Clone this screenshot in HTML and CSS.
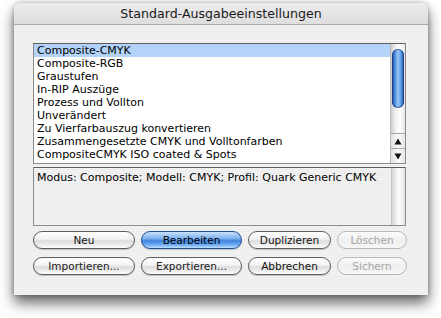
FILE: index.html
```html
<!DOCTYPE html>
<html>
<head>
<meta charset="utf-8">
<link rel="stylesheet" href="styles.css">
</head>
<body>
<div class="window">
  <div class="titlebar">Standard-Ausgabeeinstellungen</div>
  <div class="content">
    <div class="listbox">
      <ul class="items">
        <li class="sel">Composite-CMYK</li>
        <li>Composite-RGB</li>
        <li>Graustufen</li>
        <li>In-RIP Auszüge</li>
        <li>Prozess und Vollton</li>
        <li>Unverändert</li>
        <li>Zu Vierfarbauszug konvertieren</li>
        <li>Zusammengesetzte CMYK und Volltonfarben</li>
        <li>CompositeCMYK ISO coated &amp; Spots</li>
      </ul>
      <div class="scroll">
        <div class="track"><div class="thumb"></div></div>
        <div class="arrow">
          <svg width="8" height="7" viewBox="0 0 8 7"><path d="M4 0.5 L7.5 6.5 L0.5 6.5 Z" fill="#111"/></svg>
        </div>
        <div class="arrow down">
          <svg width="8" height="7" viewBox="0 0 8 7"><path d="M0.5 0.5 L7.5 0.5 L4 6.5 Z" fill="#111"/></svg>
        </div>
      </div>
    </div>
    <div class="descbox">
      <div class="desc">Modus: Composite; Modell: CMYK; Profil: Quark Generic CMYK</div>
      <div class="emptytrack"></div>
    </div>
    <div class="buttons">
      <button class="btn">Neu</button>
      <button class="btn default">Bearbeiten</button>
      <button class="btn">Duplizieren</button>
      <button class="btn disabled">Löschen</button>
      <button class="btn light">Importieren...</button>
      <button class="btn light">Exportieren...</button>
      <button class="btn">Abbrechen</button>
      <button class="btn disabled">Sichern</button>
    </div>
  </div>
</div>
</body>
</html>
```
FILE: styles.css
```css
html, body {
  margin: 0;
  padding: 0;
  background: #ffffff;
  width: 441px;
  height: 318px;
  overflow: hidden;
  font-family: "DejaVu Sans", "Liberation Sans", sans-serif;
}
.window {
  margin: 3px 0 0 14px;
  width: 414px;
  height: 292px;
  border-radius: 6px 6px 0 0;
  background: repeating-linear-gradient(180deg, #ececec 0 1px, #f3f3f3 1px 2px);
  box-shadow: 0 8px 14px rgba(0,0,0,0.6), 0 0 5px rgba(0,0,0,0.3);
  display: flex;
  flex-direction: column;
}
.titlebar {
  height: 21px;
  border-radius: 6px 6px 0 0;
  background: linear-gradient(180deg, #ececec, #dedede);
  border-bottom: 1px solid #ababab;
  text-align: center;
  font-size: 12.6px;
  line-height: 21px;
  color: #1a1a1a;
}
.content {
  padding: 18px 0 0 19px;
  display: flex;
  flex-direction: column;
}
.listbox {
  width: 371px;
  height: 119px;
  border: 1px solid #8a8a8a;
  border-top-color: #5e5e5e;
  background: #fff;
  display: flex;
}
.items {
  list-style: none;
  margin: 0;
  padding: 0;
  flex: 1;
  font-size: 11px;
  color: #000;
}
.items li {
  height: 13px;
  line-height: 13px;
  padding-left: 3px;
  white-space: nowrap;
  overflow: hidden;
}
.items li.sel {
  background: #b3d3fb;
}
.scroll {
  width: 14px;
  border-left: 1px solid #b8b8b8;
  display: flex;
  flex-direction: column;
}
.track {
  flex: 1;
  background: linear-gradient(90deg, #cfcfcf, #f2f2f2 35%, #fdfdfd 65%, #e4e4e4);
  padding-top: 5px;
  display: flex;
  justify-content: center;
}
.thumb {
  width: 12px;
  height: 59px;
  border-radius: 6px;
  background: linear-gradient(90deg, #1c4aa0, #4c8ce0 25%, #9cc8f8 50%, #5c9ae6 75%, #1c4aa0);
  box-shadow: inset 0 0 0 1px rgba(20,50,120,0.6);
}
.arrow {
  height: 14px;
  border-top: 1px solid #a8a8a8;
  background: linear-gradient(90deg, #e0e0e0, #fafafa 50%, #e8e8e8);
  display: flex;
  align-items: center;
  justify-content: center;
}
.descbox {
  margin-top: 3px;
  width: 371px;
  height: 57px;
  border: 1px solid #8a8a8a;
  border-top-color: #5e5e5e;
  display: flex;
  background: transparent;
}
.desc {
  flex: 1;
  font-size: 11px;
  line-height: 13px;
  padding: 3px 0 0 3px;
  color: #000;
}
.emptytrack {
  width: 13px;
  border-left: 1px solid #c8c8c8;
  background: linear-gradient(90deg, #d4d4d4, #f6f6f6 40%, #fcfcfc 60%, #e2e2e2);
}
.buttons {
  margin-top: 5px;
  display: grid;
  grid-template-columns: 102px 101px 83px 70px;
  column-gap: 6px;
  row-gap: 8px;
}
.btn {
  height: 18px;
  margin: 0;
  padding: 0;
  border: 1px solid #5e5e5e;
  border-radius: 9px;
  background: linear-gradient(180deg, #ffffff 0%, #f2f2f2 45%, #dcdcdc 55%, #f0f0f0 85%, #ffffff 100%);
  font-family: "DejaVu Sans", "Liberation Sans", sans-serif;
  font-size: 10.5px;
  line-height: 16px;
  color: #111;
  box-shadow: 0 1px 1px rgba(0,0,0,0.2);
}
.btn.light {
  color: #222;
}
.btn.default {
  border-color: #244d98;
  background: linear-gradient(180deg, #c9e1fb 0%, #7fb1ee 40%, #3f84dd 55%, #6eaaf0 80%, #bde0ff 100%);
  color: #000;
}
.btn.disabled {
  border-color: #b8b8b8;
  color: #a4a4a4;
  background: linear-gradient(180deg, #fbfbfb, #efefef 50%, #f6f6f6);
  box-shadow: none;
}
```
